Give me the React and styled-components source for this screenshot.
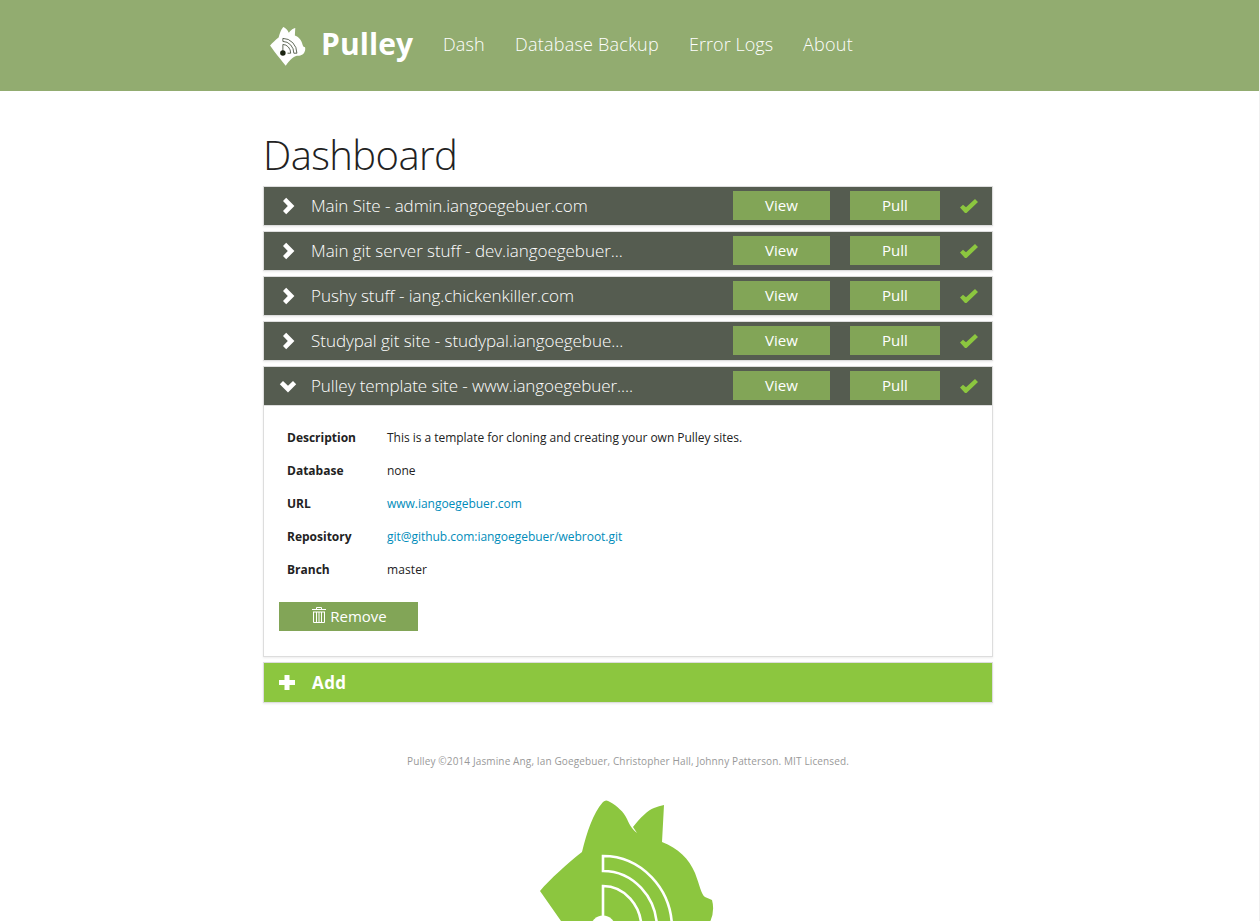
import React from "react";
import styled, { createGlobalStyle } from "styled-components";

const Global = createGlobalStyle`
  *, *::before, *::after { box-sizing: border-box; }
  body { margin: 0; background: #fff; color: #222; font-family: "Open Sans", sans-serif; overflow: hidden; }
  a { text-decoration: none; color: inherit; }
`;
const Page = styled.div`
  height: 921px;
  overflow: hidden;
  border-right: 1px solid #f0f0f0;
`;
const Header = styled.header`
  height: 91px;
  background: #92ac70;
  color: #fff;
`;
const Nav = styled.nav`
  width: 730px;
  height: 91px;
  margin-left: 263px;
  padding-left: 7px;
  display: flex;
  align-items: flex-start;
`;
const SmallLogo = styled.span`
  display: block;
  width: 36px;
  height: 39px;
  margin: 27px 15px 0 0;
  svg { display: block; }
`;
const Brand = styled.a`
  width: 122px;
  margin-top: 24px;
  font-size: 30px;
  line-height: 40px;
  font-weight: 700;
  letter-spacing: 0.1px;
`;
const NavLink = styled.a`
  width: ${(p) => p.$w}px;
  margin: 32px 30px 0 0;
  font-size: 18px;
  line-height: 25px;
  font-weight: 300;
  white-space: nowrap;
  letter-spacing: ${(p) => p.$ls || 0}px;
`;
const Main = styled.main`
  width: 730px;
  margin-left: 263px;
`;
const Title = styled.h1`
  margin: 0;
  padding: 36px 0 0;
  height: 95px;
  font-size: 40px;
  line-height: 56px;
  font-weight: 300;
  letter-spacing: -0.58px;
  white-space: nowrap;
`;
const Sites = styled.div`
  display: flex;
  flex-direction: column;
  gap: 5px;
`;
const Card = styled.section`
  border: 1px solid #ddd;
  box-shadow: 0 1px 2px rgba(0, 0, 0, 0.08);
`;
const Bar = styled.div`
  display: flex;
  align-items: center;
  height: 38px;
  background: #555c50;
  color: #fff;
`;
const IconSlot = styled.span`
  width: ${(p) => p.$w || 47}px;
  padding-left: 15px;
  display: flex;
  svg { display: block; }
`;
const SiteName = styled.span`
  width: 422px;
  font-size: 17px;
  line-height: 24px;
  font-weight: 300;
  white-space: nowrap;
  letter-spacing: ${(p) => p.$ls || 0}px;
`;
const Button = styled.button`
  width: ${(p) => p.$w}px;
  height: 29px;
  margin: 0 ${(p) => p.$gap || 0}px ${(p) => (p.$gap ? 1 : 0)}px 0;
  padding: 0 0 1px;
  border: 0;
  display: flex;
  align-items: center;
  justify-content: center;
  gap: 4px;
  background: #82a557;
  color: #fff;
  font: 400 15px/20px "Open Sans", sans-serif;
  svg { display: block; margin-bottom: 2px; }
`;
const RemoveButton = styled(Button)`
  padding-left: 2px;
`;
const Details = styled.div`
  height: 251px;
  padding: 15px 15px 0;
  border-top: 1px solid #ddd;
`;
const List = styled.dl`
  margin: 0 0 16px;
  padding-left: 8px;
`;
const Item = styled.div`
  display: flex;
  height: 33px;
  align-items: center;
  font-size: 12px;
  line-height: 18px;
`;
const Term = styled.dt`
  width: 100px;
  font-weight: 700;
`;
const Value = styled.dd`
  margin: 0;
  white-space: nowrap;
  letter-spacing: ${(p) => p.$ls || 0}px;
  a { color: #008cba; }
`;
const AddBar = styled(Bar)`
  height: 39px;
  background: #8cc63f;
  font-size: 17px;
  font-weight: 700;
  letter-spacing: 0.4px;
`;
const Footer = styled.footer`
  width: 730px;
  margin: 48px 0 0 263px;
  display: flex;
  flex-direction: column;
  align-items: center;
  font-size: 10px;
  line-height: 20px;
  letter-spacing: 0.13px;
  color: #999;
  svg { display: block; margin: 29px 0 0 -3px; }
`;

const Fox = ({ width, height, fill, line, dot, stroke, dotSize }) => (
  <svg width={width} height={height} viewBox="0 0 174 192" aria-hidden="true">
    <path
      fill={fill}
      d="M42 52C47 32 53 13 63 2Q66-1 70 2C77 6 84 12 87 19C90 26 93 30 97 33L93 27C100 18 108 10 114 8Q119 6 124 5L122 42C138 48 149 59 155 73C160 86 161 94 165 97L172 100Q175 111 170 122C166 138 145 142 132 142C113 145 93 168 77 191C60 169 42 148 21 121L0 91C10 79 28 63 42 52Z"
    />
    <g fill="none" stroke={line} strokeWidth={stroke}>
      <path d="M63 56A69 73 0 0 1 132 129H117A54 58 0 0 0 63 71Z" />
      <path d="M63 127V86A38.5 43 0 0 1 101.5 129H86" />
    </g>
    <circle cx="63" cy="128" r={dotSize} fill={dot} />
  </svg>
);

const Chevron = ({ down }) => (
  <svg width="18" height="18" viewBox="0 0 18 18">
    <path
      fill="#fff"
      d="M7.2 .8L15.4 9L7.2 17.2L4 14L8.8 9L4 4Z"
      transform={down ? "rotate(90 9 9)" : undefined}
    />
  </svg>
);
const Check = () => (
  <svg width="18" height="16" viewBox="0 0 18 16">
    <path fill="#8cc63f" d="M15 1L18 4L6.5 15H5L0 9.5L3 6.8L6 9.3Z" />
  </svg>
);
const Plus = () => (
  <svg width="16" height="16" viewBox="0 0 16 16">
    <path fill="#fff" d="M5.500 0h5v5h5.500v5h-5.500v5h-5v-5h-5.500v-5h5.500z" />
  </svg>
);
const Trash = () => (
  <svg width="14" height="17" viewBox="0 0 14 17">
    <path
      fill="none"
      stroke="#fff"
      d="M4.5 2V.5h5V2M0 2.5h14M1.5 5v10.5h11V5M1 5h12M4.5 5v10M7 5v10M9.5 5v10"
    />
  </svg>
);

const sites = [
  ["Main Site - admin.iangoegebuer.com", -0.065],
  ["Main git server stuff - dev.iangoegebuer...", -0.045],
  ["Pushy stuff - iang.chickenkiller.com", -0.045],
  ["Studypal git site - studypal.iangoegebue...", -0.03],
  ["Pulley template site - www.iangoegebuer....", -0.075],
];

const SiteBar = ({ name, ls, open }) => (
  <Bar>
    <IconSlot><Chevron down={open} /></IconSlot>
    <SiteName $ls={ls}>{name}</SiteName>
    <Button $w={97} $gap={20}>View</Button>
    <Button $w={90} $gap={20}>Pull</Button>
    <Check />
  </Bar>
);

export default function App() {
  return (
    <Page>
      <Global />
      <Header>
        <Nav>
          <SmallLogo>
            <Fox width={35.5} height={39} fill="#fff" line="#3f4935" dot="#1c2413" stroke={4} dotSize={13.5} />
          </SmallLogo>
          <Brand href="#">Pulley</Brand>
          <NavLink href="#" $w={42} $ls={0.1}>Dash</NavLink>
          <NavLink href="#" $w={144} $ls={0.23}>Database Backup</NavLink>
          <NavLink href="#" $w={84} $ls={0.05}>Error Logs</NavLink>
          <NavLink href="#" $w={50} $ls={0.25}>About</NavLink>
        </Nav>
      </Header>
      <Main>
        <Title>Dashboard</Title>
        <Sites>
          {sites.map(([name, ls], i) => (
            <Card key={name}>
              <SiteBar name={name} ls={ls} open={i === 4} />
              {i === 4 && (
                <Details>
                  <List>
                    <Item><Term>Description</Term><Value $ls={-0.03}>This is a template for cloning and creating your own Pulley sites.</Value></Item>
                    <Item><Term>Database</Term><Value $ls={-0.1}>none</Value></Item>
                    <Item><Term>URL</Term><Value $ls={-0.03}><a href="#">www.iangoegebuer.com</a></Value></Item>
                    <Item><Term>Repository</Term><Value $ls={-0.03}><a href="#">git@github.com:iangoegebuer/webroot.git</a></Value></Item>
                    <Item><Term>Branch</Term><Value $ls={0.1}>master</Value></Item>
                  </List>
                  <RemoveButton $w={139}><Trash />Remove</RemoveButton>
                </Details>
              )}
            </Card>
          ))}
          <Card>
            <AddBar><IconSlot $w={48}><Plus /></IconSlot>Add</AddBar>
          </Card>
        </Sites>
      </Main>
      <Footer>
        <span>Pulley ©2014 Jasmine Ang, Ian Goegebuer, Christopher Hall, Johnny Patterson. MIT Licensed.</span>
        <Fox width={174} height={192} fill="#8cc63f" line="#fff" dot="#fff" stroke={2.6} dotSize={12.5} />
      </Footer>
    </Page>
  );
}
